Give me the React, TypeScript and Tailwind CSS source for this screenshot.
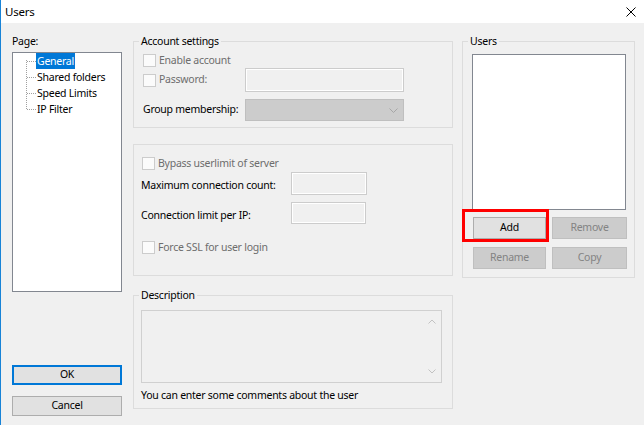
import React from "react";

function Check() {
  return <span className="box-border block h-[13px] w-[13px] shrink-0 border border-[#cccccc] bg-[#fbfbfb]" />;
}

function Group({
  label,
  className = "",
  children,
}: {
  label?: string;
  className?: string;
  children?: React.ReactNode;
}) {
  return (
    <div className={`relative box-border border border-[#dcdcdc] ${className}`}>
      {label && (
        <span className="absolute left-[5px] top-[-9px] whitespace-nowrap bg-[#f0f0f0] px-[2px] leading-[16px] text-black">
          {label}
        </span>
      )}
      {children}
    </div>
  );
}

function Field({ className = "" }: { className?: string }) {
  return (
    <div
      className={`box-border shrink-0 border border-[#cccccc] bg-[#f0f0f0] shadow-[inset_0_0_0_1px_#ffffff] ${className}`}
    />
  );
}

function Btn({
  label,
  disabled = false,
  className = "",
}: {
  label: string;
  disabled?: boolean;
  className?: string;
}) {
  return (
    <div
      className={`box-border flex h-[22px] shrink-0 items-center justify-center border ${
        disabled
          ? "border-[#bfbfbf] bg-[#cccccc] text-[#838383]"
          : "border-[#adadad] bg-[#e1e1e1] text-black"
      } ${className}`}
    >
      {label}
    </div>
  );
}

function TreeLines() {
  return (
    <svg width="23" height="64" viewBox="0 0 23 64" className="shrink-0" shapeRendering="crispEdges">
      <g stroke="#a0a0a0" strokeWidth="1" strokeDasharray="1 1">
        <line x1="13.5" y1="7" x2="13.5" y2="57" />
        <line x1="14" y1="8.5" x2="23" y2="8.5" />
        <line x1="14" y1="24.5" x2="23" y2="24.5" />
        <line x1="14" y1="40.5" x2="23" y2="40.5" />
        <line x1="14" y1="56.5" x2="23" y2="56.5" />
      </g>
    </svg>
  );
}

export default function App() {
  return (
    <div className="box-border flex h-[425px] w-[644px] flex-col overflow-hidden whitespace-nowrap border-l border-[#1883d7] bg-[#f0f0f0] font-['Noto_Sans',sans-serif] text-[10.5px] tracking-[-0.25px] text-black">
      {/* Title bar */}
      <div className="flex h-[23px] shrink-0 items-center justify-between bg-white pl-[4px] pr-[8px]">
        <span className="text-[11.5px] leading-[16px]">Users</span>
        <svg width="10" height="10" viewBox="0 0 10 10">
          <path d="M0.5 0.5L9.5 9.5M9.5 0.5L0.5 9.5" stroke="#000" strokeWidth="1" />
        </svg>
      </div>

      <div className="flex flex-1 pl-[11px]">
        {/* Left column */}
        <div className="flex w-[110px] shrink-0 flex-col pt-[10px]">
          <div className="h-[16px] leading-[16px]">Page:</div>
          <div className="mt-[3px] box-border flex h-[240px] border border-[#828790] bg-white">
            <TreeLines />
            <div className="flex flex-col">
              <div className="h-[16px]">
                <span className="inline-block h-[16px] bg-[#0078d7] px-px leading-[16px] text-white">General</span>
              </div>
              <div className="h-[16px] pl-px leading-[16px]">Shared folders</div>
              <div className="h-[16px] pl-px leading-[16px]">Speed Limits</div>
              <div className="h-[16px] pl-px leading-[16px]">IP Filter</div>
            </div>
          </div>
          <div className="mt-[73px] box-border flex h-[20px] items-center justify-center border-2 border-[#0078d7] bg-[#e1e1e1]">
            OK
          </div>
          <div className="mt-[11px] box-border flex h-[20px] items-center justify-center border border-[#adadad] bg-[#e1e1e1]">
            Cancel
          </div>
        </div>

        {/* Middle column */}
        <div className="ml-[11px] flex w-[320px] shrink-0 flex-col pt-[18px]">
          <Group label="Account settings" className="h-[87px]">
            <div className="flex flex-col pl-[9px]">
              <div className="mt-[11px] flex h-[15px] items-center gap-[3px] text-[#6d6d6d]">
                <Check />
                <span className="leading-[15px]">Enable account</span>
              </div>
              <div className="flex h-[24px] items-center">
                <div className="flex w-[102px] shrink-0 items-center gap-[3px] text-[#6d6d6d]">
                  <Check />
                  <span>Password:</span>
                </div>
                <Field className="h-[24px] w-[159px]" />
              </div>
              <div className="mt-[7px] flex h-[22px] items-center">
                <span className="w-[102px] shrink-0">Group membership:</span>
                <div className="box-border flex h-[22px] w-[159px] shrink-0 items-center justify-end border border-[#bfbfbf] bg-[#cccccc] pr-[5px]">
                  <svg width="9" height="5" viewBox="0 0 9 5">
                    <path d="M0.5 0.5L4.5 4.5L8.5 0.5" fill="none" stroke="#a6a6a6" strokeWidth="1" />
                  </svg>
                </div>
              </div>
            </div>
          </Group>

          <Group className="mt-[16px] h-[132px]">
            <div className="flex flex-col pl-[7px]">
              <div className="mt-[11px] flex h-[15px] items-center gap-[3px] pl-px text-[#6d6d6d]">
                <Check />
                <span>Bypass userlimit of server</span>
              </div>
              <div className="mt-px flex h-[23px] items-center">
                <span className="w-[150px] shrink-0 pt-[4px]">Maximum connection count:</span>
                <Field className="h-[23px] w-[76px]" />
              </div>
              <div className="mt-[7px] flex h-[22px] items-center">
                <span className="w-[150px] shrink-0 pt-[6px]">Connection limit per IP:</span>
                <Field className="h-[22px] w-[75px]" />
              </div>
              <div className="mt-[16px] flex h-[15px] items-center gap-[3px] pl-px text-[#6d6d6d]">
                <Check />
                <span>Force SSL for user login</span>
              </div>
            </div>
          </Group>

          <Group label="Description" className="mt-[19px] h-[114px]">
            <div className="flex flex-col pl-[7px]">
              <div className="mt-[14px] box-border flex h-[73px] w-[301px] border border-[#d0d0d0] bg-[#f0f0f0]">
                <div className="flex-1" />
                <div className="flex w-[18px] flex-col items-center justify-between py-[8px]">
                  <svg width="8" height="5" viewBox="0 0 8 5">
                    <path d="M0.5 4.5L4 1L7.5 4.5" fill="none" stroke="#c2c2c2" strokeWidth="1" />
                  </svg>
                  <svg width="8" height="5" viewBox="0 0 8 5">
                    <path d="M0.5 0.5L4 4L7.5 0.5" fill="none" stroke="#c2c2c2" strokeWidth="1" />
                  </svg>
                </div>
              </div>
              <div className="mt-[4px] h-[16px] leading-[16px]">You can enter some comments about the user</div>
            </div>
          </Group>
        </div>

        {/* Right column */}
        <div className="ml-[9px] flex w-[173px] shrink-0 flex-col pt-[18px]">
          <Group label="Users" className="h-[237px]">
            <div className="flex flex-col">
              <div className="ml-[9px] mt-[12px] box-border h-[156px] w-[154px] border border-[#828790] bg-white" />
              <div className="ml-[10px] mt-[7px] flex gap-[6px]">
                <Btn label="Add" className="w-[73px]" />
                <Btn label="Remove" disabled className="w-[75px]" />
              </div>
              <div className="ml-[10px] mt-[8px] flex gap-[6px]">
                <Btn label="Rename" disabled className="w-[73px]" />
                <Btn label="Copy" disabled className="w-[75px]" />
              </div>
            </div>
            <div className="pointer-events-none absolute left-[-1px] top-[167px] box-border h-[33px] w-[87px] border-[3px] border-[#ff0000]" />
          </Group>
        </div>
      </div>
    </div>
  );
}
